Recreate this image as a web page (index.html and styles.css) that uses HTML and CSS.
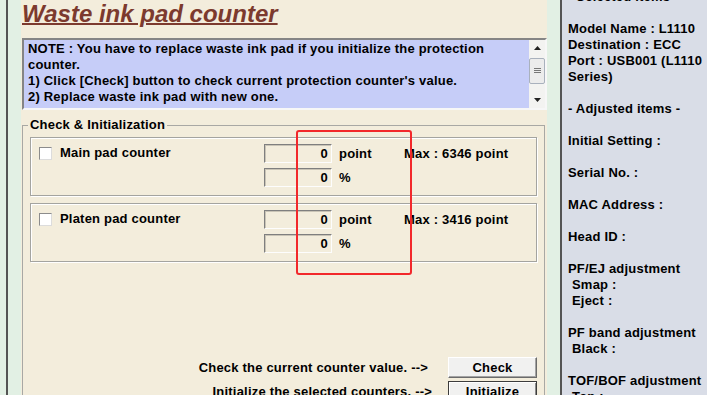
FILE: index.html
```html
<!DOCTYPE html>
<html>
  <head>
    <title>Waste ink pad counter</title>
    <link rel="stylesheet" href="styles.css">
  </head>
  <body>
    <div class="edge"></div>

    <main class="main">
      <h1 class="title">Waste ink pad counter</h1>

      <div class="note">
        <div class="note-text">
          NOTE : You have to replace waste ink pad if you initialize the protection<br>
          counter.<br>
          1) Click [Check] button to check current protection counter's value.<br>
          2) Replace waste ink pad with new one.
        </div>
        <div class="scrollbar">
          <div class="sb-arrow">
            <svg width="7" height="4" viewBox="0 0 7 4"><path d="M3.5 0 L7 4 L0 4 Z" fill="#222"/></svg>
          </div>
          <div class="sb-thumb">
            <svg width="7" height="6" viewBox="0 0 7 6">
              <path d="M0 0.5 H7 M0 2.5 H7 M0 4.5 H7" stroke="#777" stroke-width="1"/>
            </svg>
          </div>
          <div class="sb-track"></div>
          <div class="sb-arrow">
            <svg width="7" height="4" viewBox="0 0 7 4"><path d="M0 0 L7 0 L3.5 4 Z" fill="#222"/></svg>
          </div>
        </div>
      </div>

      <fieldset class="group">
        <legend>Check &amp; Initialization</legend>

        <div class="counter">
          <label class="counter-name"><span class="check"></span>Main pad counter</label>
          <div class="field">0</div>
          <span class="unit">point</span>
          <span class="max">Max : 6346 point</span>
          <div class="field field-second">0</div>
          <span class="unit">%</span>
        </div>

        <div class="counter">
          <label class="counter-name"><span class="check"></span>Platen pad counter</label>
          <div class="field">0</div>
          <span class="unit">point</span>
          <span class="max">Max : 3416 point</span>
          <div class="field field-second">0</div>
          <span class="unit">%</span>
        </div>

        <div class="action action-check">
          <span>Check the current counter value. --&gt;</span>
          <button class="btn">Check</button>
        </div>
        <div class="action action-init">
          <span>Initialize the selected counters. --&gt;</span>
          <button class="btn btn-default">Initialize</button>
        </div>
      </fieldset>
    </main>

    <div class="divider"></div>

    <aside class="side">
      <div class="side-list">
        <p>- Selected items -</p>
        <p>Model Name : L1110<br>Destination : ECC<br>Port : USB001 (L1110 Series)</p>
        <p>- Adjusted items -</p>
        <p>Initial Setting :</p>
        <p>Serial No. :</p>
        <p>MAC Address :</p>
        <p>Head ID :</p>
        <p>PF/EJ adjustment<br><span class="indent">Smap :</span><br><span class="indent">Eject :</span></p>
        <p>PF band adjustment<br><span class="indent">Black :</span></p>
        <p>TOF/BOF adjustment<br><span class="indent">Top :</span><br><span class="indent">Bottom :</span></p>
      </div>
    </aside>

    <!-- red marker drawn over the screenshot -->
    <div class="highlight"></div>
  </body>
</html>
```

FILE: styles.css
```css
body {
  margin: 0;
  height: 395px;
  overflow: hidden;
  display: flex;
  background-color: #e2f0e4;
  font-family: "Liberation Sans", Arial, sans-serif;
  font-size: 13px;
  font-weight: bold;
  line-height: 16px;
  letter-spacing: 0.2px;
  color: #000;
}

.edge {
  margin-left: 6px;
  width: 13px;
  border-left: 2px solid #545454;
  flex-shrink: 0;
}

.main {
  width: 526px;
  flex-shrink: 0;
  padding-left: 1px;
  box-sizing: border-box;
  background-color: #f3eddc;
  overflow: hidden;
}

.title {
  margin: 0 0 10px;
  font-size: 24px;
  line-height: 28px;
  letter-spacing: 0;
  font-style: italic;
  font-weight: bold;
  color: #7c3a2e;
  text-decoration: underline;
  text-decoration-thickness: 2px;
}

.note {
  display: flex;
  height: 72px;
  box-sizing: border-box;
  border: 2px solid;
  border-color: #858585 #f7f7f7 #f7f7f7 #858585;
  background-color: #c6cdf8;
}

.note-text {
  flex: 1;
  padding: 1px 4px 0 4px;
  white-space: nowrap;
}

.scrollbar {
  width: 16px;
  display: flex;
  flex-direction: column;
  background-color: #f3f3f1;
}

.sb-arrow {
  height: 16px;
  display: flex;
  align-items: center;
  justify-content: center;
}

.sb-thumb {
  margin-top: 2px;
  height: 26px;
  box-sizing: border-box;
  border: 1px solid #a9b1bd;
  border-radius: 2px;
  background-color: #ececec;
  display: flex;
  align-items: center;
  justify-content: center;
}

.sb-track {
  flex: 1;
}

.group {
  margin: 7px 2px 0 0;
  padding: 4px 7px 40px;
  border: 1px solid #a8a8a4;
  min-width: 0;
}

.group legend {
  padding: 0 2px;
  margin-left: -2px;
}

.counter {
  display: grid;
  grid-template-columns: 225px 68px 72px 1fr;
  grid-template-rows: 19px 19px;
  row-gap: 5px;
  align-items: center;
  padding: 6px 0 8px 8px;
  border: 1px solid #a4a4a0;
  box-shadow: 1px 1px 0 #fff, inset 1px 1px 0 #fff;
}

.counter + .counter {
  margin-top: 7px;
}

.counter-name {
  display: flex;
  align-items: center;
  gap: 8px;
  margin-top: -1px;
}

.check {
  width: 13px;
  height: 13px;
  box-sizing: border-box;
  border: 1px solid;
  border-color: #8c8c8c #dcdcdc #dcdcdc #8c8c8c;
  background-color: #fff;
}

.field {
  height: 19px;
  box-sizing: border-box;
  border: 1px solid;
  border-color: #7f7f7f #fdfdfd #fdfdfd #7f7f7f;
  box-shadow: inset 1px 1px 0 #c9c4b6;
  padding-right: 3px;
  text-align: right;
  line-height: 18px;
}

.field-second {
  grid-column: 2;
}

.unit {
  padding-left: 7px;
  padding-top: 1px;
}

.max {
  padding-top: 1px;
}

.action {
  display: flex;
  align-items: center;
  justify-content: flex-end;
}

.action-check {
  margin-top: 95px;
}

.action-check .btn {
  margin-left: 20px;
}

.action-init {
  margin-top: 3px;
}

.action-init .btn {
  margin-left: 16px;
}

.btn {
  width: 89px;
  height: 21px;
  padding: 0;
  font-family: "Liberation Sans", Arial, sans-serif;
  font-size: 13px;
  font-weight: bold;
  letter-spacing: 0.2px;
  color: #000;
  background-color: #f1f1f0;
  border: 1px solid;
  border-color: #fff #6b6b6b #6b6b6b #fff;
  box-shadow: inset -1px -1px 0 #a3a3a3;
}

.btn-default {
  border: 1px solid #3c3c3c;
  box-shadow: inset 1px 1px 0 #fff, inset -1px -1px 0 #8a8a8a;
}

.divider {
  width: 13px;
  border-right: 2px solid #545454;
  flex-shrink: 0;
}

.side {
  flex: 1;
  padding-left: 6px;
  background-color: #d9dde7;
  overflow: hidden;
}

.side-list {
  margin-top: -11px;
}

.side p {
  margin: 0 0 16px;
}

.indent {
  padding-left: 4px;
}

.highlight {
  position: absolute;
  left: 296px;
  top: 130px;
  width: 116px;
  height: 145px;
  box-sizing: border-box;
  border: 2px solid #f2282b;
  border-radius: 3px;
}
```
